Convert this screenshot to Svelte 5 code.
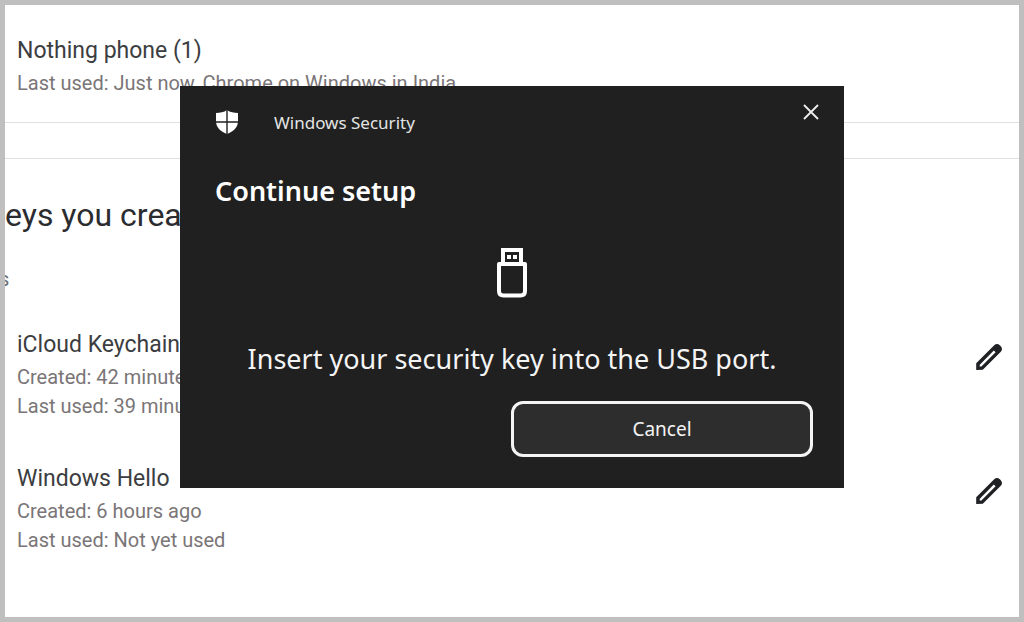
<!--
  Passkey list with the Windows Security prompt open on top of it.
-->
<script lang="ts">
  interface Passkey {
    name: string;
    details: string[];
  }

  const automatic: Passkey = {
    name: 'Nothing phone (1)',
    details: ['Last used: Just now, Chrome on Windows in India'],
  };

  const created: Passkey[] = [
    {
      name: 'iCloud Keychain',
      details: ['Created: 42 minutes ago', 'Last used: 39 minutes ago'],
    },
    {
      name: 'Windows Hello',
      details: ['Created: 6 hours ago', 'Last used: Not yet used'],
    },
  ];

  let open = $state(true);

  function close() {
    open = false;
  }
</script>

{#snippet info(key: Passkey)}
  <div class="info">
    <h3>{key.name}</h3>
    {#each key.details as line}
      <p>{line}</p>
    {/each}
  </div>
{/snippet}

<div class="page">
  <main>
    <section class="card card--top">
      {@render info(automatic)}
    </section>

    <section class="card card--created">
      <h2>eys you created</h2>
      <p class="hint">s</p>

      <ul>
        {#each created as key}
          <li>
            {@render info(key)}
            <button class="edit" aria-label="Edit {key.name}">
              <svg viewBox="0 0 28 28" width="28" height="28" aria-hidden="true">
                <path
                  d="M1.2 20.200 L19.200 2.200 Q22 -.2 24.800 2.200 L25.800 3.200 Q28.200 6 25.800 8.800 L7.800 26.800 L1.200 27 Z M4.800 21.800 L4.600 23.600 L6.400 23.400 L20.600 9.200 L18.800 7.400 Z"
                  fill="#202124"
                  fill-rule="evenodd"
                />
              </svg>
            </button>
          </li>
        {/each}
      </ul>
    </section>
  </main>

  {#if open}
    <div class="prompt" role="dialog" aria-labelledby="prompt-title">
      <header>
        <svg class="shield" viewBox="0 0 24 24" width="24" height="24" aria-hidden="true">
          <path
            d="M12 0 C9 2.2 5 3 1 3 V11 C1 17.500 5.500 21.500 12 24 C18.500 21.500 23 17.500 23 11 V3 C19 3 15 2.200 12 0 Z"
            fill="#fff"
          />
          <path d="M12 0 V24 M1 12 H23" stroke="#202020" stroke-width="1.4" />
        </svg>
        <span>Windows Security</span>
        <button class="close" aria-label="Close" onclick={close}>
          <svg viewBox="0 0 16 16" width="16" height="16" aria-hidden="true">
            <path d="M1 1 L15 15 M15 1 L1 15" stroke="#eee" stroke-width="1.8" />
          </svg>
        </button>
      </header>

      <h1 id="prompt-title">Continue setup</h1>

      <svg class="usb" viewBox="0 0 32 52" width="32" height="52" aria-hidden="true">
        <path d="M7 18 V3 H25 V18" fill="none" stroke="#fff" stroke-width="4" />
        <path d="M11 8 h4 v4 h-4 Z M17 8 h4 v4 h-4 Z" fill="#fff" />
        <path
          d="M3 17 H29 V44 Q29 48.500 24.500 48.500 H7.500 Q3 48.500 3 44 Z"
          fill="#202020"
          stroke="#fff"
          stroke-width="4"
          stroke-linejoin="round"
        />
      </svg>

      <p class="message">Insert your security key into the USB port.</p>

      <div class="actions">
        <button class="cancel" onclick={close}>Cancel</button>
      </div>
    </div>
  {/if}
</div>

<style>
  :global(body) {
    background: #fff;
  }

  .page {
    position: relative;
    box-sizing: border-box;
    min-height: 100vh;
    border: 5px solid #bfbfbf;
    background: #fff;
    overflow: hidden;
    font-family: Roboto, sans-serif;
    color: #3c3d41;
  }

  h1, h2, h3, p, ul {
    margin: 0;
    padding: 0;
    font-weight: 400;
  }

  button {
    padding: 0;
    border: 0;
    background: none;
    font: inherit;
    color: inherit;
    cursor: pointer;
  }

  /* Passkey list */
  main {
    display: flex;
    flex-direction: column;
    gap: 35px;
  }

  .card--top {
    padding: 28px 12px 24px;
    border-bottom: 1px solid #e0e0e0;
  }

  .card--created {
    border-top: 1px solid #e0e0e0;
    padding: 36px 12px 48px;
  }

  h2 {
    margin-left: -12px;
    font-size: 32px;
    line-height: 40px;
    color: #2b2c30;
  }

  .hint {
    margin: 30px 0 0 -18px;
    font-size: 20px;
    line-height: 28px;
    color: #6b6e73;
  }

  ul {
    display: flex;
    flex-direction: column;
    gap: 40px;
    margin-top: 34px;
    list-style: none;
  }

  li {
    display: flex;
    align-items: flex-start;
    justify-content: space-between;
  }

  h3 {
    font-size: 23px;
    line-height: 36px;
  }

  .info p {
    font-size: 20px;
    line-height: 29px;
    color: #7a7577;
  }

  .edit {
    display: flex;
    margin: 16px 4px 0 0;
  }

  /* Windows Security prompt */
  .prompt {
    position: absolute;
    top: 81px;
    left: 50%;
    transform: translateX(-50%);
    box-sizing: border-box;
    width: 664px;
    max-width: 100%;
    padding: 16px 31px 31px;
    display: flex;
    flex-direction: column;
    background: #202020;
    color: #fff;
    font-family: "Noto Sans", "Open Sans", sans-serif;
  }

  header {
    display: flex;
    align-items: center;
    height: 40px;
    padding-left: 4px;
    font-size: 17px;
    color: #e4e4e4;
  }

  header span {
    flex: 1;
    margin-left: 35px;
  }

  .close {
    display: flex;
    align-self: flex-start;
    padding: 2px;
    margin-right: -8px;
  }

  h1 {
    margin: 29px 0 0 4px;
    font-size: 27px;
    line-height: 40px;
    font-weight: 600;
  }

  .usb {
    align-self: center;
    margin-top: 36px;
  }

  .message {
    margin-top: 40px;
    font-size: 27px;
    line-height: 40px;
    text-align: center;
    color: #f4f4f4;
  }

  .actions {
    display: flex;
    justify-content: flex-end;
    margin-top: 22px;
  }

  .cancel {
    width: 302px;
    height: 56px;
    border: 3px solid #f4f4f4;
    border-radius: 12px;
    background: #2d2d2d;
    font-size: 19px;
    color: #f4f4f4;
  }
</style>
